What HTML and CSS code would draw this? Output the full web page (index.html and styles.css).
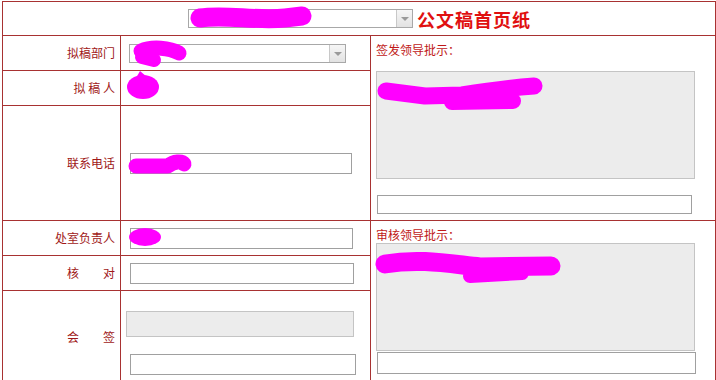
FILE: index.html
```html
<!DOCTYPE html>
<html lang="zh-CN">
<head>
	<meta charset="UTF-8">
	<title>公文稿首页纸</title>
	<link rel="stylesheet" href="styles.css">
</head>
<body>
	<div class="page">
		<table class="sheet">
			<colgroup>
				<col class="c1"><col class="c2"><col class="c3">
			</colgroup>
			<tr class="r-head">
				<td colspan="3">
					<div class="head">
						<div class="select wide"><span class="arrow"></span></div>
						<span class="title">公文稿首页纸</span>
					</div>
				</td>
			</tr>
			<tr class="r35">
				<td class="label">拟稿部门</td>
				<td><div class="select dept"><span class="arrow"></span></div></td>
				<td rowspan="3" class="note top">
					<div class="note-title">签发领导批示：</div>
					<div class="area a1"></div>
					<div class="text t1"></div>
				</td>
			</tr>
			<tr class="r35">
				<td class="label">拟&nbsp;稿&nbsp;人</td>
				<td></td>
			</tr>
			<tr class="r-phone">
				<td class="label">联系电话</td>
				<td><div class="text ph"></div></td>
			</tr>
			<tr class="r35">
				<td class="label">处室负责人</td>
				<td><div class="text f1"></div></td>
				<td rowspan="3" class="note bottom">
					<div class="note-title">审核领导批示：</div>
					<div class="area a2"></div>
					<div class="text t2"></div>
				</td>
			</tr>
			<tr class="r35">
				<td class="label">核&emsp;&emsp;对</td>
				<td><div class="text f2"></div></td>
			</tr>
			<tr class="r-sign">
				<td class="label">会&emsp;&emsp;签</td>
				<td class="sign">
					<div class="area small"></div>
					<div class="text f3"></div>
				</td>
			</tr>
		</table>

		<!-- 涂抹掉的内容 -->
		<svg class="blot" width="716" height="380" viewBox="0 0 716 380">
			<g fill="none" stroke="#ff00ff" stroke-linecap="round" stroke-linejoin="round">
				<path d="M200 18 C225 14, 255 21, 285 18 L302 16" stroke-width="19"/>
				<path d="M141 51 C152 46, 170 48, 179 53" stroke-width="15"/>
				<path d="M142 57 L154 60" stroke-width="14"/>
				<path d="M136 166 L168 166 C174 161, 182 161, 184 164" stroke-width="15"/>
				<path d="M386 91 L425 96 L462 95 C492 90, 520 87, 534 86" stroke-width="17"/>
				<path d="M452 102 L513 101" stroke-width="16"/>
				<path d="M385 264 C420 258, 450 264, 480 267 L551 266" stroke-width="19"/>
				<path d="M470 276 L522 273" stroke-width="14"/>
			</g>
			<g fill="#ff00ff">
				<ellipse cx="143" cy="87" rx="16" ry="12"/>
				<path d="M136 78 L140 71 L147 77 Z"/>
				<ellipse cx="145" cy="237" rx="16" ry="9"/>
			</g>
		</svg>
	</div>
</body>
</html>
```

FILE: styles.css
```css
body {
	margin: 0;
	font-family: "Noto Sans CJK SC", "Liberation Sans", sans-serif;
	font-size: 12px;
	background: #fff;
}
.page {/*整个页面*/
	position: relative;
	width: 716px;
	height: 380px;
	overflow: hidden;
}
.sheet {/*外框表格*/
	border-collapse: collapse;
	table-layout: fixed;
	width: 713px;
	margin: 1px 0 0 2px;
}
.sheet td {
	border: 1px solid #a83232;
	padding: 0;
}
.c1 { width: 118px; }
.c2 { width: 250px; }
.c3 { width: 345px; }

.r-head { height: 34px; }
.r35 { height: 35px; }
.r-phone { height: 115px; }
.r-sign { height: 92px; }

.head {/*标题行*/
	display: flex;
	justify-content: center;
	align-items: center;
	gap: 4px;
	padding-left: 1px;
}
.title {
	font-size: 18px;
	font-weight: bold;
	color: #e01010;
	letter-spacing: 1px;
}
.label {/*左边的文字*/
	text-align: right;
	padding-right: 5px !important;
	color: #a01818;
	line-height: 16px;
}

/* 下拉框 */
.select {
	display: flex;
	justify-content: flex-end;
	box-sizing: border-box;
	height: 19px;
	border: 1px solid #a8a8a8;
	background: #fff;
}
.select.wide { width: 225px; }
.select.dept { width: 217px; margin-left: 8px; }
.arrow {
	position: relative;
	width: 15px;
	border-left: 1px solid #c8c8c8;
	background: linear-gradient(#f6f6f6, #e2e2e2);
}
.arrow::after {/*小三角*/
	content: "";
	position: absolute;
	left: 4px;
	top: 7px;
	border-left: 4px solid transparent;
	border-right: 4px solid transparent;
	border-top: 4px solid #9a9a9a;
}

/* 输入框 */
.text {
	box-sizing: border-box;
	height: 21px;
	border: 1px solid #a0a0a0;
	background: #fff;
}
.ph { width: 222px; margin-left: 9px; }
.f1 { width: 223px; margin-left: 9px; }
.f2 { width: 224px; margin-left: 9px; }
.f3 { width: 226px; margin-left: 9px; margin-top: 17px; }

.area {/*灰色的文本框*/
	box-sizing: border-box;
	border: 1px solid #c4c4c4;
	background: #ececec;
}
.area.small { width: 228px; height: 26px; margin-left: 5px; }

.sign { vertical-align: top; padding-top: 20px !important; }

/* 右边批示 */
.note {
	vertical-align: top;
	padding-left: 5px !important;
}
.note-title {
	color: #c01818;
	line-height: 16px;
}
.top .note-title { margin-top: 6px; }
.bottom .note-title { margin-top: 6px; }
.a1 { width: 319px; height: 108px; margin-top: 13px; }
.t1 { width: 315px; height: 19px; margin: 16px 0 0 1px; }
.a2 { width: 319px; height: 108px; margin-top: 0; }
.t2 { width: 319px; height: 22px; margin: 1px 0 0 1px; }

.blot {/*涂抹*/
	position: absolute;
	left: 0;
	top: 0;
	pointer-events: none;
}
```
